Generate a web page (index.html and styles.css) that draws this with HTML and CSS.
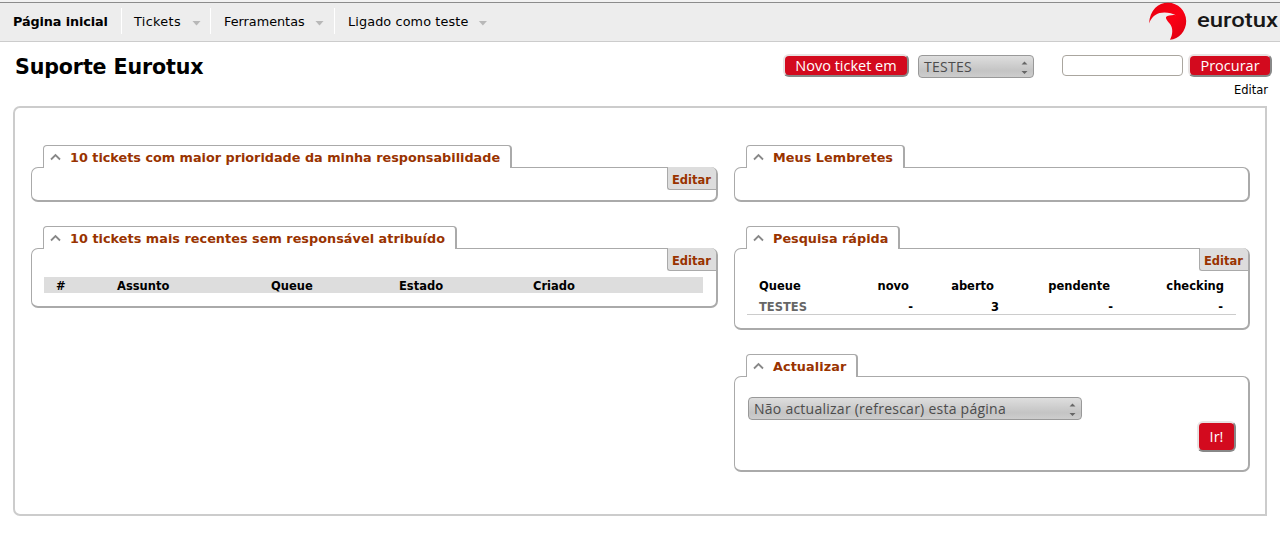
FILE: index.html
```html
<!DOCTYPE html>
<html lang="pt">
<head>
<meta charset="utf-8">
<title>Suporte Eurotux</title>
<link rel="stylesheet" href="styles.css">
</head>
<body>
<header class="topbar">
  <nav class="nav">
    <a class="nav-item nav-home"><span>Página inicial</span></a>
    <a class="nav-item nav-tickets"><span>Tickets</span><i class="caret"></i></a>
    <a class="nav-item nav-tools"><span>Ferramentas</span><i class="caret"></i></a>
    <a class="nav-item nav-user"><span>Ligado como teste</span><i class="caret"></i></a>
  </nav>
  <svg class="logo" width="134" height="39" viewBox="0 0 134 39">
    <defs><linearGradient id="red" x1="0" y1="0" x2="1" y2="1"><stop offset="0" stop-color="#e60010"/><stop offset=".55" stop-color="#fa0014"/><stop offset="1" stop-color="#d80010"/></linearGradient></defs>
    <path fill="url(#red)" d="M3 21.5C4 8 12 .8 22 .8C32 .8 40.2 9 40.2 19C40.2 29 33 37.2 24 37.7C27 32 27 26 24 22C21 18.500 19.500 16.500 20 15C22 13.500 26 12.800 30 13.200C26 11 19 9.500 13.500 11C8 12.800 5 16.500 3 21.500Z"/>
    <text class="logo-text" x="51" y="25" textLength="81" lengthAdjust="spacingAndGlyphs">eurotux</text>
  </svg>
</header>
<section class="titlebar">
  <h1 class="title">Suporte Eurotux</h1>
  <div class="actions">
    <button class="btn btn-new"><span>Novo ticket em</span></button>
    <div class="select select-queue"><span>TESTES</span><svg width="7" height="13" viewBox="0 0 7 13"><path d="M0.500 3.500L3.500 .5L6.500 3.500ZM0.500 10L3.500 13L6.500 10Z" fill="#666"/></svg></div>
    <input class="search" type="text">
    <button class="btn btn-search"><span>Procurar</span></button>
  </div>
</section>
<div class="page-edit"><a>Editar</a></div>
<main class="body">
  <div class="col col-left">
    <section class="widget">
      <h2 class="tab tab-priority"><svg class="chev" width="12" height="8" viewBox="0 0 12 8"><path d="M1 6.500L5.500 2L10 6.500"/></svg><span>10 tickets com maior prioridade da minha responsabilidade</span></h2>
      <div class="panel panel-empty"><a class="edit">Editar</a></div>
    </section>
    <section class="widget">
      <h2 class="tab tab-recent"><svg class="chev" width="12" height="8" viewBox="0 0 12 8"><path d="M1 6.500L5.500 2L10 6.500"/></svg><span>10 tickets mais recentes sem responsável atribuído</span></h2>
      <div class="panel panel-recent"><a class="edit">Editar</a>
        <div class="list-head"><span>#</span><span>Assunto</span><span>Queue</span><span>Estado</span><span>Criado</span></div>
      </div>
    </section>
  </div>
  <div class="col col-right">
    <section class="widget">
      <h2 class="tab tab-reminders"><svg class="chev" width="12" height="8" viewBox="0 0 12 8"><path d="M1 6.500L5.500 2L10 6.500"/></svg><span>Meus Lembretes</span></h2>
      <div class="panel panel-empty"></div>
    </section>
    <section class="widget">
      <h2 class="tab tab-quick"><svg class="chev" width="12" height="8" viewBox="0 0 12 8"><path d="M1 6.500L5.500 2L10 6.500"/></svg><span>Pesquisa rápida</span></h2>
      <div class="panel panel-quick"><a class="edit">Editar</a>
        <div class="queue-row queue-head"><span>Queue</span><span>novo</span><span>aberto</span><span>pendente</span><span>checking</span></div>
        <div class="queue-row queue-data"><span>TESTES</span><span>-</span><span>3</span><span>-</span><span>-</span></div>
      </div>
    </section>
    <section class="widget">
      <h2 class="tab tab-refresh"><svg class="chev" width="12" height="8" viewBox="0 0 12 8"><path d="M1 6.500L5.500 2L10 6.500"/></svg><span>Actualizar</span></h2>
      <div class="panel panel-refresh">
        <div class="select select-refresh"><span>Não actualizar (refrescar) esta página</span><svg width="7" height="13" viewBox="0 0 7 13"><path d="M0.500 3.500L3.500 .5L6.500 3.500ZM0.500 10L3.500 13L6.500 10Z" fill="#666"/></svg></div>
        <button class="btn btn-go"><span>Ir!</span></button>
      </div>
    </section>
  </div>
</main>
</body>
</html>
```
FILE: styles.css
```css
* { box-sizing: border-box; }
body { margin: 0; height: 538px; overflow: hidden; background: #fff; color: #000; font: 12.8px/16px "DejaVu Sans", sans-serif; }

.topbar { display: flex; justify-content: space-between; height: 42px; background: linear-gradient(#f2f2f2 2px, #8c8c8c 2px, #8c8c8c 3px, #ededed 3px); border-bottom: 1px solid #ccc; }
.nav { display: flex; padding-top: 8px; }
.nav-item { display: flex; align-items: center; height: 26px; border-right: 1px solid #fff; white-space: nowrap; }
.nav-item span { padding-top: 2px; }
.nav-home { width: 122px; padding-left: 13px; font-weight: bold; letter-spacing: -0.1px; }
.nav-tickets { width: 89px; padding-left: 12px; letter-spacing: 0.35px; }
.nav-tools { width: 124px; padding-left: 13px; }
.nav-user { padding-left: 13px; border-right: 0; letter-spacing: 0.12px; }
.caret { width: 9px; height: 5px; margin: 4px 9px 0 auto; background: #b8b8b8; clip-path: polygon(0 0, 100% 0, 50% 100%); }
.nav-tools .caret { margin-right: 10px; }
.nav-user .caret { margin-left: 10px; }
.logo { margin-top: 2px; flex: none; }
.logo-text { font: 500 20.5px Roboto, sans-serif; fill: #181818; }

.titlebar { display: flex; justify-content: space-between; height: 40px; padding: 12px 8px 0 15px; }
.title { margin: 0; font-size: 20.6px; line-height: 26px; letter-spacing: -0.13px; }
.actions { display: flex; align-items: flex-start; }
.btn { display: flex; align-items: center; justify-content: center; flex: none; padding: 0; border: 2px solid; border-color: #e8e3e3 #888 #888 #e8e3e3; border-radius: 6px; background: #d30a1e; color: #fff; font: 14.5px/18px "Open Sans", sans-serif; white-space: nowrap; }
.btn-new { width: 126px; height: 23px; }
.btn-search { width: 84px; height: 23px; margin-left: 5px; }
.select { display: flex; align-items: center; justify-content: space-between; padding: 0 5px; border: 1px solid #999; border-radius: 4px; background: linear-gradient(#dedede, #c4c4c4 70%, #cdcdcd); color: #4c4c4c; font: 14px/20px "Open Sans", sans-serif; white-space: nowrap; }
.select svg { margin-top: 2px; }
.select-queue { width: 116px; height: 23px; margin: 1px 28px 0 9px; letter-spacing: 0.25px; }
.search { width: 121px; height: 21px; margin-top: 1px; padding: 0; border: 1px solid #aaa69f; border-radius: 4px; background: #fff; }
.page-edit { height: 24px; padding-right: 12px; text-align: right; font-size: 11.5px; }

.body { display: flex; gap: 16px; width: 1254px; height: 410px; margin-left: 13px; padding: 37px 0 0 16px; border: 2px solid #ccc; border-radius: 7px 0 0 7px; }
.col { display: flex; flex-direction: column; gap: 24px; }
.col-left { width: 687px; }
.col-right { width: 516px; }
.tab { position: relative; z-index: 1; display: flex; align-items: center; height: 23px; margin: 0 0 -1px 12px; padding: 1px 0 0 6px; border: 1px solid #aaa; border-right-width: 2px; border-bottom: 0; border-radius: 4px 4px 0 0; background: #fff; color: #993300; font-size: 12.8px; line-height: 16px; white-space: nowrap; }
.tab-priority { width: 469px; }
.tab-recent { width: 414px; letter-spacing: 0.04px; }
.tab-reminders { width: 159px; letter-spacing: 0.05px; }
.tab-quick { width: 154px; }
.tab-refresh { width: 112px; letter-spacing: 0.08px; }
.chev { margin: -2px 8px 0 0; fill: none; stroke: #888; stroke-width: 1.8; }
.panel { position: relative; border: 1px solid #aaa; border-right-width: 2px; border-bottom-width: 2px; border-radius: 7px; }
.panel-empty { height: 35px; }
.panel-recent { height: 60px; padding: 28px 13px 0 12px; }
.panel-quick { height: 82px; padding: 28px 12px 0; }
.panel-refresh { display: flex; flex-direction: column; height: 96px; padding: 20px 12px 0 13px; }
.edit { position: absolute; top: -1px; right: 0; width: 49px; height: 23px; padding: 4px 0 0 4px; border: 1px solid #aaa; border-width: 0 0 1px 1px; border-radius: 0 5px 0 3px; background: #ddd; color: #993300; font-size: 11.5px; font-weight: bold; line-height: 18px; }
.list-head { display: grid; grid-template-columns: 61px 154px 128px 134px 1fr; height: 16px; padding-left: 12px; background: #ddd; font-size: 11.5px; font-weight: bold; line-height: 18px; }
.queue-row { display: grid; grid-template-columns: 60px 90px 85px 116px 114px; padding-left: 12px; font-size: 11.5px; font-weight: bold; line-height: 18px; }
.queue-row span:not(:first-child) { text-align: right; }
.queue-head { height: 21px; }
.queue-data { height: 17px; grid-template-columns: 60px 94px 86px 114px 110px; border-bottom: 1px solid #ccc; }
.queue-data span:first-child { color: #666; }
.select-refresh { width: 334px; height: 23px; letter-spacing: 0.25px; }
.btn-go { align-self: flex-end; width: 39px; height: 31px; margin-top: 1px; }
```
